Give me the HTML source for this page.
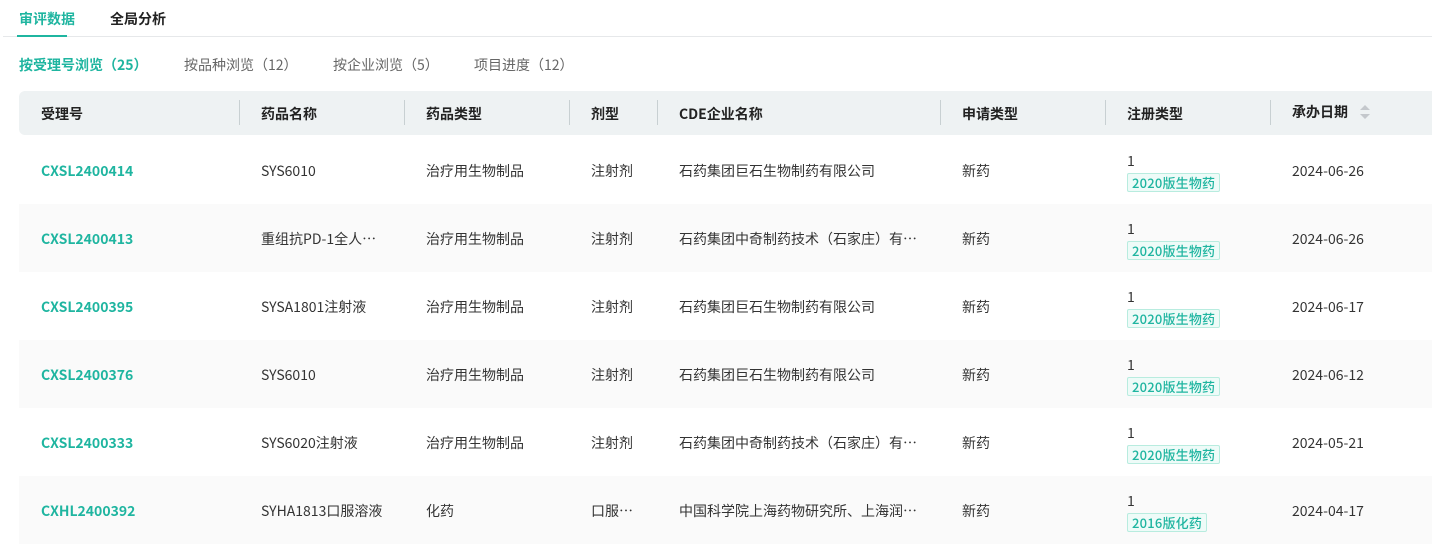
<!DOCTYPE html>
<html><head><meta charset="utf-8"><style>
*{margin:0;padding:0;box-sizing:border-box}
body{width:1432px;height:555px;background:#fff;font-family:"Noto Sans CJK SC",sans-serif;font-size:14px;color:#333;position:relative;overflow:hidden}
.a{position:absolute;white-space:nowrap;line-height:20px}
.teal{color:#1fb5a0}
.hdr{position:absolute;left:19px;top:91px;width:1420px;height:44px;background:#eef2f3;border-radius:6px}
.div{position:absolute;top:100px;width:1px;height:25px;background:#c8d0d2}
.row{position:absolute;left:19px;width:1413px;height:68px}
.tag{position:absolute;font-size:13px;color:#1fb5a0;background:#eefbf8;border:1px solid #b8ecdf;border-radius:2px;padding:0 4px;line-height:17px;font-weight:500;letter-spacing:0.2px}
</style></head><body>
<div class="a teal" style="left:19px;top:9px;font-weight:bold">审评数据</div>
<div class="a" style="left:110px;top:9px;font-weight:bold;color:#222">全局分析</div>
<div class="a" style="left:3px;top:36px;width:1429px;height:1px;background:#e6e8ea"></div>
<div class="a" style="left:17px;top:35px;width:50px;height:2px;background:#1fb5a0"></div>
<div class="a teal" style="left:19px;top:55px;font-weight:bold">按受理号浏览（25）</div>
<div class="a" style="left:184px;top:55px;color:#666">按品种浏览（12）</div>
<div class="a" style="left:333px;top:55px;color:#666">按企业浏览（5）</div>
<div class="a" style="left:474px;top:55px;color:#666">项目进度（12）</div>
<div class="hdr"></div>
<div class="div" style="left:239px"></div><div class="div" style="left:404px"></div><div class="div" style="left:569px"></div><div class="div" style="left:657px"></div><div class="div" style="left:940px"></div><div class="div" style="left:1105px"></div><div class="div" style="left:1270px"></div>
<div class="a" style="top:104px;left:41px;font-weight:bold;color:#222">受理号</div>
<div class="a" style="top:104px;left:261px;font-weight:bold;color:#222">药品名称</div>
<div class="a" style="top:104px;left:426px;font-weight:bold;color:#222">药品类型</div>
<div class="a" style="top:104px;left:591px;font-weight:bold;color:#222">剂型</div>
<div class="a" style="top:104px;left:679px;font-weight:bold;color:#222">CDE企业名称</div>
<div class="a" style="top:104px;left:962px;font-weight:bold;color:#222">申请类型</div>
<div class="a" style="top:104px;left:1127px;font-weight:bold;color:#222">注册类型</div>
<div class="a" style="top:102px;left:1292px;font-weight:bold;color:#222">承办日期</div>
<svg class="a" style="left:1359px;top:104px" width="12" height="16"><path d="M6 1 L11 6 H1Z M6 15 L11 10 H1Z" fill="#c4c8cc"/></svg>
<div class="row" style="top:204px;background:#fafafa"></div>
<div class="row" style="top:340px;background:#fafafa"></div>
<div class="row" style="top:476px;background:#fafafa"></div>
<div id="rows"></div>
<script>
var d=[["CXSL2400414","SYS6010","治疗用生物制品","注射剂","石药集团巨石生物制药有限公司","2020版生物药","2024-06-26"],
["CXSL2400413","重组抗PD-1全人…","治疗用生物制品","注射剂","石药集团中奇制药技术（石家庄）有…","2020版生物药","2024-06-26"],
["CXSL2400395","SYSA1801注射液","治疗用生物制品","注射剂","石药集团巨石生物制药有限公司","2020版生物药","2024-06-17"],
["CXSL2400376","SYS6010","治疗用生物制品","注射剂","石药集团巨石生物制药有限公司","2020版生物药","2024-06-12"],
["CXSL2400333","SYS6020注射液","治疗用生物制品","注射剂","石药集团中奇制药技术（石家庄）有…","2020版生物药","2024-05-21"],
["CXHL2400392","SYHA1813口服溶液","化药","口服…","中国科学院上海药物研究所、上海润…","2016版化药","2024-04-17"]];
var h="";d.forEach(function(r,i){var t=161+68*i;
h+='<div class="a teal" style="left:41px;top:'+t+'px;font-weight:bold">'+r[0]+'</div>';
h+='<div class="a" style="left:261px;top:'+t+'px">'+r[1]+'</div>';
h+='<div class="a" style="left:426px;top:'+t+'px">'+r[2]+'</div>';
h+='<div class="a" style="left:591px;top:'+t+'px">'+r[3]+'</div>';
h+='<div class="a" style="left:679px;top:'+t+'px">'+r[4]+'</div>';
h+='<div class="a" style="left:962px;top:'+t+'px">新药</div>';
h+='<div class="a" style="left:1127px;top:'+(t-10)+'px">1</div>';
h+='<div class="tag" style="left:1127px;top:'+(t+12)+'px">'+r[5]+'</div>';
h+='<div class="a" style="left:1292px;top:'+t+'px">'+r[6]+'</div>';});
document.getElementById("rows").innerHTML=h;
</script>
</body></html>
